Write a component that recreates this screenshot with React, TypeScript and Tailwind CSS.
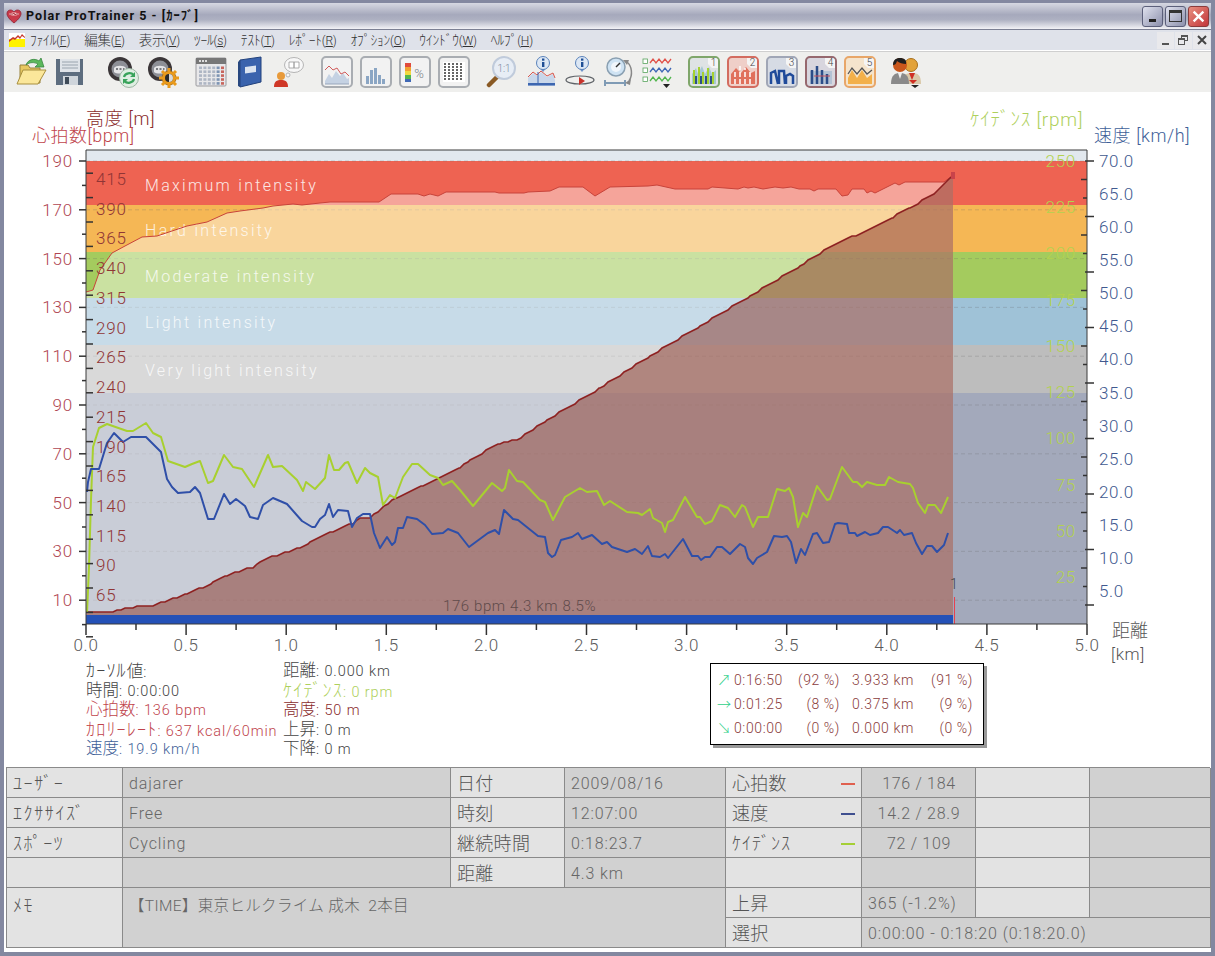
import React from "react";

const hrPts = "86,292 93,290 100,270 112,253 125,246 142,237 157,236 187,226 207,222 227,213 240,211 263,208 273,206 293,204 302,205 320,203 330,202 379,202 391,194 418,194 424,196 430,194 438,196 446,192 495,192 499,193 524,193 528,192 550,191 559,187 583,187 595,196 610,187 648,186 657,185 675,189 708,189 712,187 738,189 744,187 748,188 754,187 763,189 775,187 783,188 791,187 799,189 810,189 814,191 818,189 836,189 842,196 848,195 852,189 864,189 867,193 871,191 875,193 885,188 895,183 899,185 905,182 944,182 952,176";

const altKeys: [number, number][] = [[86,612],[113,611],[133,607],[153,605],[177,597],[187,593],[203,587],[213,582],[227,575],[253,567],[260,561],[277,555],[300,548],[310,542],[333,531],[353,523],[360,518],[370,517],[380,510],[397,497],[423,485],[460,467],[470,460],[500,443],[517,440],[547,420],[600,388],[650,356],[700,326],[750,296],[800,266],[828,248],[856,235],[893,217],[910,208],[934,193],[953,176]];

function stair(keys: [number, number][]) {
  const out: string[] = [];
  for (let i = 0; i < keys.length - 1; i++) {
    const [x0, y0] = keys[i];
    const [x1, y1] = keys[i + 1];
    for (let x = x0; x < x1; x += 4) {
      const y = y0 + ((y1 - y0) * (x - x0)) / (x1 - x0);
      out.push(`${x},${Math.round(y / 2) * 2}`);
    }
  }
  out.push("953,176");
  return out.join(" ");
}
const altPts = stair(altKeys);

const cadPts = "87,613 89,567 91,500 93,447 99,428 107,424 127,431 133,431 146,423 153,433 161,437 168,461 185,467 192,464 200,461 208,483 213,481 224,455 233,467 242,469 254,487 268,455 273,467 282,466 297,480 303,491 306,482 315,489 325,478 329,455 334,470 339,470 345,463 348,462 357,483 365,468 370,473 378,477 383,505 390,495 395,498 403,477 412,464 418,464 430,475 438,478 443,485 452,481 460,490 473,506 492,483 502,491 505,488 509,470 517,481 523,482 540,500 545,502 553,520 565,497 580,488 587,492 597,491 604,505 610,501 627,512 638,513 642,515 650,509 653,518 662,523 665,532 668,522 673,520 685,497 697,517 700,517 705,524 712,521 720,505 728,508 735,517 742,505 745,507 753,527 758,517 768,517 777,489 785,491 789,488 793,497 798,527 803,513 807,517 817,486 827,500 830,499 842,467 853,482 857,482 862,487 867,482 877,485 885,485 889,477 898,482 910,484 913,488 918,503 925,513 928,505 935,505 941,513 948,497";

const spdPts = "87,492 88,482 91,469 99,469 107,443 114,433 123,442 131,437 146,437 161,452 167,479 172,487 178,493 190,492 195,487 200,493 208,519 214,519 224,494 230,504 236,499 245,506 250,517 258,519 263,505 273,498 287,504 302,521 312,527 315,527 320,519 325,515 329,504 333,517 338,510 348,511 352,527 357,518 363,514 370,514 374,533 380,548 387,537 392,545 395,542 398,528 403,528 407,517 417,519 425,525 432,534 443,533 448,529 458,533 469,547 488,533 495,530 499,534 504,510 513,519 518,520 538,536 545,537 548,553 552,557 555,555 561,540 572,537 578,533 582,539 592,535 602,544 607,542 612,547 627,552 635,549 642,554 648,546 652,556 660,557 665,554 668,558 683,539 692,556 698,556 701,560 705,557 710,557 717,547 722,547 730,554 740,544 745,547 748,558 753,564 757,558 767,552 774,536 782,537 787,536 791,542 796,563 801,549 805,555 813,534 817,533 823,543 829,542 835,524 838,523 847,524 849,533 855,533 857,536 865,532 870,535 878,533 883,527 888,527 897,533 900,530 904,535 912,533 916,543 922,554 927,546 932,546 937,552 944,545 948,533";

const hrTicks = [190, 170, 150, 130, 110, 90, 70, 50, 30, 10];
const altTicks = [415, 390, 365, 340, 315, 290, 265, 240, 215, 190, 165, 140, 115, 90, 65];
const cadTicks = [250, 225, 200, 175, 150, 125, 100, 75, 50, 25];
const spdTicks = [70, 65, 60, 55, 50, 45, 40, 35, 30, 25, 20, 15, 10, 5];
const kmTicks = ["0.0", "0.5", "1.0", "1.5", "2.0", "2.5", "3.0", "3.5", "4.0", "4.5", "5.0"];
const bands: [number, number, string, string, number][] = [
  [205, 252, "#f5b755", "Hard intensity", 236],
  [252, 298, "#a4cb5e", "Moderate intensity", 282],
  [298, 345, "#9fc2d7", "Light intensity", 328],
  [345, 393, "#bdbdbd", "Very light intensity", 376],
];

function Chart() {
  const hy = (v: number) => 161 + (190 - v) * 2.44;
  return (
    <svg viewBox="4 92 1207 568" className="block w-[1207px] h-[568px] overflow-visible">
      <text x="86" y="125" fontSize="18" fill="#8a2c2c" className="tracking-[0.7px]">高度 [m]</text>
      <text x="32" y="142" fontSize="18" fill="#c0444c" className="tracking-[0.5px]">心拍数[bpm]</text>
      <text x="970" y="126" fontSize="19" fill="#aed05c" className="tracking-[0.8px]">ｹｲﾃﾞﾝｽ [rpm]</text>
      <text x="1094" y="142" fontSize="18" fill="#3f5f99" className="tracking-[0.6px]">速度 [km/h]</text>

      <rect x="86" y="150" width="1001" height="474" fill="#a3a9bb" />
      <rect x="86" y="150" width="1001" height="11" fill="#e2e8ee" />
      <rect x="86" y="161" width="1001" height="44" fill="#ee6352" />
      {bands.map(([a, b, c]) => (
        <rect key={a} x="86" y={a} width="1001" height={b - a} fill={c} />
      ))}
      <text x="145" y="191" fontSize="16" fill="#ffffff" opacity="0.85" className="tracking-[2.3px]">Maximum intensity</text>
      {bands.map(([a, , , t, y]) => (
        <text key={a} x="145" y={y} fontSize="16" fill="#ffffff" opacity="0.8" className="tracking-[2.3px]">{t}</text>
      ))}
      {hrTicks.map((v) => (
        <line key={v} x1="86" x2="1087" y1={hy(v)} y2={hy(v)} stroke="#666" strokeOpacity="0.25" strokeDasharray="4 3" />
      ))}
      <polygon points={`86,624 ${hrPts} 953,176 953,624`} fill="#ffffff" fillOpacity="0.42" />
      <polygon points={`86,624 ${altPts} 953,624`} fill="#883426" fillOpacity="0.5" />
      <polyline points={hrPts} fill="none" stroke="#c8433a" strokeWidth="1" />
      <polyline points={altPts} fill="none" stroke="#8e2222" strokeWidth="1.6" />
      <rect x="951" y="172" width="4" height="7" fill="#c9434a" />
      <rect x="86" y="615" width="867" height="9" fill="#2451b7" />
      <line x1="954.5" x2="954.5" y1="597" y2="624" stroke="#e8404f" />
      <text x="950" y="589" fontSize="14" fill="#444">1</text>
      <text x="443" y="611" fontSize="15" fill="#5f4a4a" className="tracking-[0.6px]">176 bpm 4.3 km 8.5%</text>

      {cadTicks.map((v) => (
        <text key={v} x="1076" y={161 + (250 - v) * 1.849 + 6} fontSize="17" fill="#b3d24f" textAnchor="end" className="tracking-[0.7px]">{v}</text>
      ))}
      <polyline points={cadPts} fill="none" stroke="#a8d02f" strokeWidth="2" strokeLinejoin="round" />
      <polyline points={spdPts} fill="none" stroke="#2f4fa8" strokeWidth="2" strokeLinejoin="round" />

      <path d="M86 150H1087V624H86Z" fill="none" stroke="#3a3a3a" />
      {hrTicks.map((v) => (
        <React.Fragment key={v}>
          <line x1="79" x2="86" y1={hy(v)} y2={hy(v)} stroke="#333" strokeWidth="1.5" />
          <line x1="82" x2="86" y1={hy(v) + 24.4} y2={hy(v) + 24.4} stroke="#333" strokeWidth="1.5" />
          <line x1="86" x2="93" y1={hy(v) + 12.2} y2={hy(v) + 12.2} stroke="#333" strokeWidth="1.5" />
          <line x1="86" x2="93" y1={hy(v) + 36.6} y2={hy(v) + 36.6} stroke="#333" strokeWidth="1.5" />
          <text x="73" y={hy(v) + 6} fontSize="17" fill="#b04652" textAnchor="end" className="tracking-[0.8px]">{v}</text>
        </React.Fragment>
      ))}
      {altTicks.map((v) => (
        <text key={v} x="96" y={179 + (415 - v) * 1.189 + 6} fontSize="17" fill="#903535" className="tracking-[0.8px]">{v}</text>
      ))}
      {spdTicks.map((v) => (
        <text key={v} x="1099" y={161 + (70 - v) * 6.615 + 6} fontSize="17" fill="#41598f" className="tracking-[0.6px]">{v.toFixed(1)}</text>
      ))}
      {Array.from({ length: 25 }, (_, i) => i).map((i) => (
        <line key={i} x1={i % 3 === 0 ? 1085 : 1081 + (i % 3 === 2 ? 2 : 0)} x2={i % 3 === 0 ? 1094 : 1087} y1={161 + i * 18.5} y2={161 + i * 18.5} stroke="#333" strokeWidth="1.5" />
      ))}
      {kmTicks.map((t, i) => (
        <React.Fragment key={t}>
          <line x1={86 + i * 100.1} x2={86 + i * 100.1} y1="624" y2="635" stroke="#333" strokeWidth="1.5" />
          {i < 10 && <line x1={136 + i * 100.1} x2={136 + i * 100.1} y1="624" y2="630" stroke="#333" strokeWidth="1.5" />}
          <text x={86 + i * 100.1} y="651" fontSize="17" fill="#5a5a5a" textAnchor="middle" className="tracking-[0.7px]">{t}</text>
        </React.Fragment>
      ))}
      <text x="1112" y="637" fontSize="18" fill="#555">距離</text>
      <text x="1111" y="660" fontSize="17" fill="#555" className="tracking-[0.6px]">[km]</text>
    </svg>
  );
}

const Mn = ({ c }: { c: string }) => <span className="underline">{c}</span>;

const menu = [
  ["ﾌｧｲﾙ", "F"], ["編集", "E"], ["表示", "V"], ["ﾂｰﾙ", "s"], ["ﾃｽﾄ", "T"], ["ﾚﾎﾟｰﾄ", "R"], ["ｵﾌﾟｼｮﾝ", "O"], ["ｳｲﾝﾄﾞｳ", "W"], ["ﾍﾙﾌﾟ", "H"],
];

function TitleBar() {
  return (
    <div className="h-[27px] flex items-center bg-[linear-gradient(#d6d8e2,#a6a9bc_45%,#aeb1c2_65%,#f2f2f6)] border-b border-[#7c8094]">
      <svg viewBox="0 0 16 16" className="w-[16px] h-[16px] ml-[2px]">
        <path d="M8 15C3 11 1 8 1 5.500C1 3 3 2 4.500 2C6 2 7.300 3 8 4C8.700 3 10 2 11.500 2C13 2 15 3 15 5.500C15 8 13 11 8 15Z" fill="#c93a4a" stroke="#8e2030" strokeWidth="0.8" />
        <path d="M3 6C5 4 11 4 13 6C11 8 5 8 3 6Z" fill="#f3c8c8" />
        <path d="M4 6H7L8 5L9 7L10 6H12" fill="none" stroke="#a02030" strokeWidth="0.8" />
      </svg>
      <span className="ml-[4px] text-[12.5px] font-bold tracking-[1.05px] text-[#111]">Polar ProTrainer 5 - [ｶｰﾌﾞ]</span>
      <div className="ml-auto mr-[2px] flex gap-[2px]">
        <div className="w-[21px] h-[21px] rounded-[3px] border border-[#5b5f7a] bg-[linear-gradient(135deg,#dfe1ee,#8c90ac)] flex items-end justify-center pb-[4px]">
          <div className="w-[7px] h-[3px] bg-[#222]" />
        </div>
        <div className="w-[21px] h-[21px] rounded-[3px] border border-[#5b5f7a] bg-[linear-gradient(135deg,#dfe1ee,#8c90ac)] flex items-center justify-center">
          <div className="w-[13px] h-[12px] border border-t-[3px] border-[#333]" />
        </div>
        <div className="w-[21px] h-[21px] rounded-[3px] border border-[#8a3b3b] bg-[linear-gradient(135deg,#e88f80,#c2353a)] flex items-center justify-center">
          <svg viewBox="0 0 12 12" className="w-[13px] h-[13px]"><path d="M1.500 1.500L10.500 10.500M10.500 1.500L1.500 10.500" stroke="#fff" strokeWidth="2.200" /></svg>
        </div>
      </div>
    </div>
  );
}

function MenuBar() {
  return (
    <div className="h-[21px] flex items-center bg-[#dfe2ea] border-b border-white">
      <svg viewBox="0 0 16 14" className="w-[16px] h-[14px] ml-[5px]">
        <rect width="16" height="14" fill="#ffffff" />
        <rect y="6" width="16" height="8" fill="#fff200" />
        <path d="M0 7L4 4L6 5L9 2L11 4L13 1L16 4L16 5L13 3L11 6L9 4L6 7L4 6L0 9Z" fill="#c8382c" />
      </svg>
      <div className="ml-[5px] flex gap-[14px] text-[12px] text-[#333] tracking-[-0.2px]">
        {menu.map(([a, b]) => (
          <span key={b}><span className="text-[13.5px] tracking-[-0.2px]">{a}</span>(<Mn c={b} />)</span>
        ))}
      </div>
      <div className="ml-auto mr-[1px] flex gap-[1px] text-[#555]">
        <div className="w-[17px] h-[17px] bg-[#e9e9ec] flex items-end justify-center pb-[4px]"><div className="w-[7px] h-[2px] bg-[#555]" /></div>
        <div className="w-[17px] h-[17px] bg-[#e9e9ec] relative">
          <div className="absolute left-[6px] top-[3px] w-[7px] h-[6px] border border-t-2 border-[#555]" />
          <div className="absolute left-[3px] top-[6px] w-[7px] h-[7px] border border-t-2 border-[#555] bg-[#e9e9ec]" />
        </div>
        <div className="w-[17px] h-[17px] bg-[#e9e9ec] flex items-center justify-center">
          <svg viewBox="0 0 10 10" className="w-[10px] h-[10px]"><path d="M1 1L9 9M9 1L1 9" stroke="#444" strokeWidth="2" /></svg>
        </div>
      </div>
    </div>
  );
}

const I = ({ children }: { children: React.ReactNode }) => (
  <svg viewBox="0 0 32 32" className="w-[32px] h-[32px] shrink-0">{children}</svg>
);

const Open = () => (
  <I>
    <path d="M5 9H13L15 12H25V27H5Z" fill="#e8c860" stroke="#96803a" />
    <path d="M2 28L8 14H31L23 28Z" fill="#fbe79a" stroke="#a88f3e" />
    <path d="M11 9C13 3 20 2 24 5L26 2L29 11L20 11L23 8C19 6 15 6 11 9Z" fill="#5cb85c" stroke="#2f7f3a" strokeWidth="0.7" />
  </I>
);
const Save = () => (
  <I>
    <path d="M2 3H29V29H2Z" fill="#5d6d7f" />
    <rect x="6" y="3" width="20" height="13" fill="#dfe3e8" />
    <path d="M8 6H24M8 9H24M8 12H24" stroke="#9aa4ae" />
    <rect x="9" y="20" width="15" height="9" fill="#cfd5db" />
    <rect x="11" y="21" width="4" height="7" fill="#3f4b58" />
  </I>
);
const Orb = ({ children }: { children: React.ReactNode }) => (
  <I>
    <circle cx="13" cy="13" r="12" fill="#3b3638" />
    <circle cx="13" cy="13" r="8.500" fill="#8d8f96" />
    <path d="M7 12C9 9 17 9 19 12L19 16C17 18 9 18 7 16Z" fill="#e4e4e6" />
    <path d="M9 13H11M12.500 13H14.500M16 13H17.500" stroke="#55585f" strokeWidth="1.500" />
    {children}
  </I>
);
const Refresh = () => (
  <Orb>
    <circle cx="22" cy="22" r="9.500" fill="#dfeee2" stroke="#9bb5a2" />
    <path d="M17 21C18 17 24 16 26.500 19M27 23C26 27 20 28 17.500 25" fill="none" stroke="#38a35a" strokeWidth="2.200" />
    <path d="M28 16V21H23ZM16 28V23H21Z" fill="#38a35a" />
  </Orb>
);
const Gear = () => (
  <Orb>
    <circle cx="22" cy="22" r="7" fill="#e99a1c" stroke="#a86a10" />
    <path d="M22 12V32M12 22H32M15 15L29 29M29 15L15 29" stroke="#e99a1c" strokeWidth="3" />
    <circle cx="22" cy="22" r="4" fill="#2b2b2b" />
    <path d="M22 18A4 4 0 0 1 22 26Z" fill="#d9d9d9" />
  </Orb>
);
const Calendar = () => (
  <I>
    <rect x="1" y="2" width="30" height="28" rx="1" fill="#e8e8ea" stroke="#9a9a9e" />
    <rect x="1" y="2" width="30" height="6" fill="#777" />
    <path d="M4 5H13" stroke="#fff" strokeWidth="1.500" strokeDasharray="2 1" />
    {[0, 1, 2, 3, 4].map((r) =>
      [0, 1, 2, 3, 4, 5].map((c) => (
        <rect key={`${r}${c}`} x={4 + c * 4.4} y={10.500 + r * 3.900} width="3" height="2.600" fill={c === 5 ? "#c8655c" : c === 4 ? "#7d94b3" : "#aeb6c4"} />
      ))
    )}
  </I>
);
const Book = () => (
  <I>
    <path d="M6 4L27 1V26L6 31Z" fill="#3a63ad" stroke="#23427c" />
    <path d="M6 4L4 6V30L6 31Z" fill="#28487f" />
    <path d="M11 11L22 9.500V16L11 17.500Z" fill="#dbe4f0" />
  </I>
);
const Think = () => (
  <I>
    <ellipse cx="21" cy="9" rx="9.500" ry="7.500" fill="#f7f7f7" stroke="#b5b5b5" />
    <circle cx="15" cy="19" r="2" fill="#f7f7f7" stroke="#b5b5b5" />
    <path d="M16 6H21V12H16ZM21 6H26V12H21Z" fill="#fff" stroke="#999" strokeWidth="0.800" />
    <circle cx="8" cy="20" r="4" fill="#e89a3a" />
    <path d="M1 31C1 25 4 24 8 24C12 24 15 25 15 31Z" fill="#cf3727" />
  </I>
);
const Btn = ({ children, c = "#a9adb2", n, bg = "#f2f2f2" }: { children: React.ReactNode; c?: string; n?: string; bg?: string }) => (
  <I>
    <rect x="1" y="1" width="30" height="30" rx="4" fill={bg} stroke={c} strokeWidth="2" />
    {children}
    {n && (
      <>
        <path d="M20 2H27C29 2 30 3 30 5V12H24L20 8Z" fill="#f5f5f5" />
        <text x="25.500" y="10" fontSize="10" fill="#444" textAnchor="middle">{n}</text>
      </>
    )}
  </I>
);
const Magnifier = () => (
  <I>
    <path d="M3 29L13 19" stroke="#8a5a24" strokeWidth="4.500" strokeLinecap="round" />
    <circle cx="18" cy="12" r="11" fill="#e7edf5" stroke="#c0cbdb" strokeWidth="2" />
    <text x="18" y="16" fontSize="10" fill="#7d8a9c" textAnchor="middle">1:1</text>
  </I>
);
const Info = ({ cx }: { cx: number }) => (
  <>
    <path d={`M${cx - 6} 9L${cx} 16L${cx + 6} 9Z`} fill="#6d93c9" />
    <circle cx={cx} cy="7" r="6.500" fill="#dce7f4" stroke="#5a83bb" />
    <rect x={cx - 1} y="6" width="2.400" height="5" fill="#1f4f95" />
    <rect x={cx - 1} y="2.500" width="2.400" height="2.200" fill="#1f4f95" />
  </>
);
const InfoChart = () => (
  <I>
    <Info cx={18} />
    <path d="M3 22L8 17L12 20L16 16L22 21L28 18L30 24V30H3Z" fill="#c9d7ea" />
    <path d="M3 21L8 16L12 19L16 15L22 20L28 17L30 22" fill="none" stroke="#d9574d" />
    <rect x="3" y="27" width="27" height="2.500" fill="#3d66b0" />
    <path d="M13 16V27" stroke="#3d66b0" />
  </I>
);
const InfoOrbit = () => (
  <I>
    <Info cx={18} />
    <ellipse cx="16" cy="24" rx="14" ry="4" fill="none" stroke="#5f6368" strokeWidth="1.200" />
    <path d="M15 21L21 25L15 29Z" fill="#c8322a" />
  </I>
);
const Clock = () => (
  <I>
    <circle cx="13" cy="11" r="9" fill="#cfe3f3" stroke="#8aa0b2" strokeWidth="1.500" />
    <circle cx="13" cy="11" r="5" fill="#f1f6fb" />
    <path d="M13 11L17 7" stroke="#333" strokeWidth="1.500" />
    <path d="M2 24V30M22 24V30M2 27H22" stroke="#7f9bb5" strokeWidth="2" />
    <path d="M24 6C29 10 30 19 26 25" fill="none" stroke="#888" strokeWidth="1.500" />
    <path d="M20 4L26 4L24 9ZM22 27L28 23L27 29Z" fill="#888" />
  </I>
);
const Lines = () => (
  <I>
    {[["#e0524a", 5], ["#3f68b5", 14], ["#52b64e", 23]].map(([c, y]) => (
      <React.Fragment key={String(y)}>
        <rect x="1" y={Number(y) - 2} width="4.500" height="4.500" fill="#fff" stroke="#58a35c" strokeWidth="0.800" />
        <path d={`M8 ${Number(y) + 2}l3-4 3 4 3-4 3 4 3-4 3 4 3-4`} fill="none" stroke={String(c)} strokeWidth="1.300" />
      </React.Fragment>
    ))}
    <path d="M21 28H28L24.500 32Z" fill="#222" />
  </I>
);
const People = () => (
  <I>
    <circle cx="21" cy="9" r="6.500" fill="#e2a23a" stroke="#a8701c" />
    <path d="M12 28C12 19 16 17 22 17C28 17 31 19 31 28Z" fill="#d9c8a8" />
    <path d="M19 17L22 24L25 17Z" fill="#cf2f24" />
    <path d="M19 24H27L23 28Z" fill="#cf2f24" />
    <circle cx="10" cy="9" r="7" fill="#c9571c" />
    <path d="M3 9C3 3 7 2 10 2C14 2 17 4 16 8C13 8 9 7 7 5C6 8 5 9 3 9Z" fill="#1f1f1f" />
    <path d="M1 28C1 19 5 17 10 17C15 17 19 19 19 28Z" fill="#8a8a8a" />
    <path d="M8 17H12L10 23Z" fill="#eee" />
    <path d="M21 29H29L25 32Z" fill="#222" />
  </I>
);

function Toolbar() {
  const area = "M4 25L8 18L11 22L15 15L19 20L22 17L26 23L28 22V28H4Z";
  const bars = (c: string, c2: string) => (
    <>
      <rect x="6" y="13" width="20" height="15" fill={c2} opacity="0.5" />
      {[6, 10, 14, 18, 22].map((x, i) => (
        <rect key={x} x={x} y={[20, 14, 12, 19, 23][i]} width="3" height={28 - [20, 14, 12, 19, 23][i]} fill={c} />
      ))}
    </>
  );
  return (
    <div className="h-[41px] bg-[#efefed] border-t border-[#cfcfcf] flex items-center pl-[11px]">
      <div className="flex gap-[7px]"><Open /><Save /></div>
      <div className="flex gap-[8px] ml-[21px]"><Refresh /><Gear /></div>
      <div className="flex gap-[7px] ml-[16px]"><Calendar /><Book /><Think /></div>
      <div className="flex gap-[7px] ml-[16px]">
        <Btn>
          <path d={area} fill="#c5d2e3" />
          <path d="M4 14L8 10L12 14L16 12L20 18L24 16L28 20" fill="none" stroke="#d05c5c" />
          <path d="M4 28H28" stroke="#98a7bb" />
        </Btn>
        <Btn>{bars("#8ba6c4", "#f2f2f2")}</Btn>
        <Btn>
          <rect x="6" y="7" width="6" height="4" fill="#e04a3c" />
          <rect x="6" y="11" width="6" height="4" fill="#f0a030" />
          <rect x="6" y="15" width="6" height="4" fill="#f0d840" />
          <rect x="6" y="19" width="6" height="4" fill="#52b64e" />
          <rect x="6" y="23" width="6" height="3" fill="#3f68b5" />
          <text x="20" y="22" fontSize="13" fill="#7a7f86" textAnchor="middle">%</text>
        </Btn>
        <Btn>
          <rect x="5" y="6" width="22" height="20" fill="#fff" />
          {[7, 11, 15, 19, 23].map((x) => (
            <path key={x} d={`M${x} 7V25`} stroke="#666" strokeWidth="2" strokeDasharray="2 1" />
          ))}
        </Btn>
      </div>
      <div className="flex gap-[7px] ml-[16px]"><Magnifier /><InfoChart /><InfoOrbit /><Clock /><Lines /></div>
      <div className="flex gap-[7px] ml-[14px]">
        <Btn c="#7fa66a" n="1" bg="#dfe3e4">
          <path d="M4 28V18L8 12L10 18L14 10L17 18L21 11L24 18L28 14V28Z" fill="#a6c8d2" />
          <path d="M6 28V14M11 28V11M15 28V16M20 28V12M25 28V16" stroke="#a5d12f" strokeWidth="2" />
          <path d="M8 28V20M13 28V20M18 28V20M23 28V20" stroke="#2f4f88" strokeWidth="2" />
        </Btn>
        <Btn c="#d36c60" n="2" bg="#efcfc8">
          <path d="M4 28V18L9 12L14 17L19 11L24 17L28 15V28Z" fill="#e0705c" />
          <path d="M8 28V14M13 28V10M18 28V12M23 28V16" stroke="#fff" strokeWidth="1.500" strokeDasharray="5 2" />
        </Btn>
        <Btn c="#a0a6b6" n="3" bg="#d6dbe4">
          <path d="M5 28V17L9 15L12 28M13 28V15L18 15L19 28M20 28V20L24 18L27 20V28" fill="none" stroke="#1f4a9a" strokeWidth="2.500" />
        </Btn>
        <Btn c="#96686e" n="4" bg="#d8d6de">
          <rect x="5" y="15" width="22" height="13" fill="#b4c2d4" />
          <path d="M7 28V14M12 28V10M17 28V14M22 28V18" stroke="#2c4d88" strokeWidth="2.500" />
          <path d="M9 20H25" stroke="#c8505a" />
        </Btn>
        <Btn c="#e8a668" n="5" bg="#f5e4cc">
          <path d="M4 28V22L8 14L13 22L18 14L23 22L28 18V28Z" fill="#f3b04a" />
          <path d="M4 18L8 12L13 18L18 12L23 18L28 14" fill="none" stroke="#555" strokeWidth="1.300" />
        </Btn>
      </div>
      <div className="ml-[14px]"><People /></div>
    </div>
  );
}

const J = ({ children }: { children: React.ReactNode }) => <span className="text-[16.5px] tracking-[0px]">{children}</span>;
const K = ({ children }: { children: React.ReactNode }) => <span className="text-[18px] tracking-[1.2px]">{children}</span>;

function Stats() {
  const row = "h-[19.5px] leading-[19.5px] whitespace-nowrap";
  const tr = "flex items-center h-[24px] whitespace-nowrap";
  return (
    <div className="h-[107px] flex items-start pt-[1px] text-[14.5px] tracking-[0.9px] relative">
      <div className="ml-[82px] w-[197px] text-[#444]">
        <div className={row}><K>ｶｰｿﾙ</K><J>値</J>:</div>
        <div className={row}><J>時間</J>: 0:00:00</div>
        <div className={`${row} text-[#c0444c]`}><J>心拍数</J>: 136 bpm</div>
        <div className={`${row} text-[#c0444c]`}><K>ｶﾛﾘｰﾚｰﾄ</K>: 637 kcal/60min</div>
        <div className={`${row} text-[#3f5f99]`}><J>速度</J>: 19.9 km/h</div>
      </div>
      <div className="w-[427px] text-[#444]">
        <div className={row}><J>距離</J>: 0.000 km</div>
        <div className={`${row} text-[#aed05c]`}><K>ｹｲﾃﾞﾝｽ</K>: 0 rpm</div>
        <div className={`${row} text-[#8a2c2c]`}><J>高度</J>: 50 m</div>
        <div className={row}><J>上昇</J>: 0 m</div>
        <div className={row}><J>下降</J>: 0 m</div>
      </div>
      <div className="mt-[2px] w-[274px] h-[82px] border border-black bg-white shadow-[3px_3px_0_#999] pl-[6px] py-[4px] text-[#8a3c3c] text-[14px] tracking-[0.6px]">
        {[
          ["↗", "0:16:50", "(92 %)", "3.933 km", "(91 %)"],
          ["→", "0:01:25", "(8 %)", "0.375 km", "(9 %)"],
          ["↘", "0:00:00", "(0 %)", "0.000 km", "(0 %)"],
        ].map((r) => (
          <div key={r[1]} className={tr}>
            <span className="w-[17px] text-[#2fd08a]">{r[0]}</span>
            <span className="w-[64px]">{r[1]}</span>
            <span className="w-[42px] text-right">{r[2]}</span>
            <span className="w-[76px] pl-[12px]">{r[3]}</span>
            <span className="w-[57px] text-right">{r[4]}</span>
          </div>
        ))}
      </div>
    </div>
  );
}

function Cell({ k, v, className = "", line }: { k?: boolean; v?: string; className?: string; line?: string }) {
  return (
    <div className={`${k ? "bg-[#e3e3e3] text-[#555]" : "bg-[#d1d1d1] text-[#666]"} border-r border-b border-[#8a8a8a] flex items-center pt-[2px] pl-[6px] pr-[5px] whitespace-nowrap overflow-hidden ${className}`}>
      <span>{v}</span>
      {line && <span className={`ml-auto mr-[1px] w-[14px] h-[2px] ${line}`} />}
    </div>
  );
}

function InfoTable() {
  const kana = "text-[18px] tracking-[1.6px]";
  const big = "text-[18px] tracking-[0.3px]";
  const val = "text-[16px] tracking-[0.9px]";
  const ctr = "text-[16px] tracking-[0.7px] justify-center";
  return (
    <div className="mx-[2px] grid grid-cols-[116px_328px_114px_161px_136px_114px_114px_121px] grid-rows-[repeat(6,30px)] border-l border-t border-[#8a8a8a] w-[1204px]">
      <Cell k v="ﾕｰｻﾞｰ" className={kana} />
      <Cell v="dajarer" className={val} />
      <Cell k v="日付" className={big} />
      <Cell v="2009/08/16" className={val} />
      <Cell k v="心拍数" className={big} line="bg-[#e0604f] h-[1px]" />
      <Cell v="176 / 184" className={ctr} />
      <Cell k />
      <Cell />

      <Cell k v="ｴｸｻｻｲｽﾞ" className={kana} />
      <Cell v="Free" className={val} />
      <Cell k v="時刻" className={big} />
      <Cell v="12:07:00" className={val} />
      <Cell k v="速度" className={big} line="bg-[#3f4f8f]" />
      <Cell v="14.2 / 28.9" className={ctr} />
      <Cell k />
      <Cell />

      <Cell k v="ｽﾎﾟｰﾂ" className={kana} />
      <Cell v="Cycling" className={val} />
      <Cell k v="継続時間" className={big} />
      <Cell v="0:18:23.7" className={val} />
      <Cell k v="ｹｲﾃﾞﾝｽ" className="text-[18px] tracking-[1px]" line="bg-[#a5cf35]" />
      <Cell v="72 / 109" className={ctr} />
      <Cell k />
      <Cell />

      <Cell k />
      <Cell />
      <Cell k v="距離" className={big} />
      <Cell v="4.3 km" className={val} />
      <Cell k />
      <Cell />
      <Cell k />
      <Cell />

      <Cell k v="ﾒﾓ" className={`${kana} row-span-2 items-start pt-[4px]`} />
      <Cell v="【TIME】東京ヒルクライム 成木  2本目" className="text-[15.5px] tracking-[0.35px] col-span-3 row-span-2 items-start pt-[7px] whitespace-pre" />
      <Cell k v="上昇" className={big} />
      <Cell v="365 (-1.2%)" className={val} />
      <Cell k />
      <Cell />

      <Cell k v="選択" className={big} />
      <Cell v="0:00:00 - 0:18:20 (0:18:20.0)" className={`${val} col-span-3`} />
    </div>
  );
}

export default function App() {
  return (
    <div className="w-[1215px] h-[956px] overflow-hidden bg-[#dcdee6] border-[4px] border-t-[3px] border-[#8388a0] flex flex-col font-light [font-family:'Roboto','Noto_Sans_CJK_JP',sans-serif]">
      <TitleBar />
      <MenuBar />
      <Toolbar />
      <div className="bg-white flex-1 flex flex-col">
        <Chart />
        <Stats />
        <InfoTable />
      </div>
    </div>
  );
}
